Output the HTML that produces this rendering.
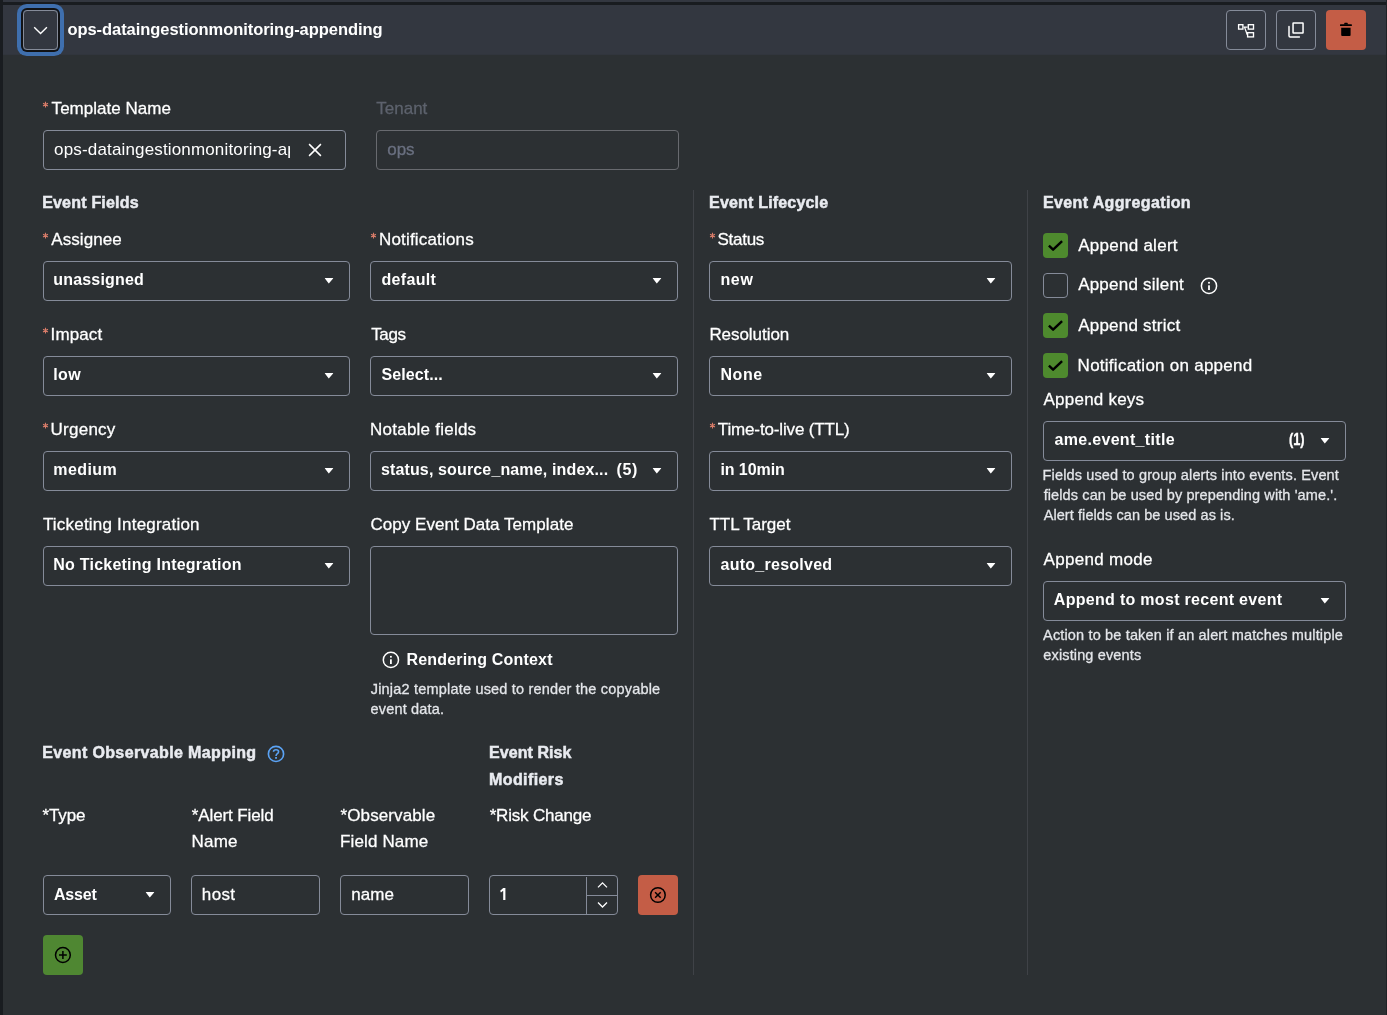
<!DOCTYPE html>
<html><head><meta charset="utf-8"><title>Template</title><style>
html,body{margin:0;padding:0}
body{width:1387px;height:1015px;overflow:hidden;background:#2c3033;font-family:"Liberation Sans",sans-serif;position:relative}
.a{position:absolute}
.t{position:absolute;line-height:20px;white-space:pre}
#tx{position:absolute;left:0;top:0;width:1387px;height:1015px;will-change:transform}
.bx{position:absolute;box-sizing:border-box;border:1px solid #858b99;border-radius:4px}
.bx.dim{border-color:#686a6f}
svg{position:absolute;overflow:visible}
</style></head>
<body>
<div class="a" style="left:0;top:0;width:3px;height:1015px;background:#191c20"></div>
<div class="a" style="left:3px;top:0;width:1384px;height:2px;background:#333740"></div>
<div class="a" style="left:3px;top:2px;width:1384px;height:3px;background:#191c20"></div>
<div class="a" style="left:3px;top:5px;width:1384px;height:49px;background:#333740"></div>
<div class="a" style="left:3px;top:54px;width:1384px;height:1px;background:#31353d"></div>
<div class="a" style="left:1386px;top:0;width:1px;height:1015px;background:#1f2226"></div>
<div class="a" style="left:693px;top:190px;width:1px;height:785px;background:#3f4247"></div>
<div class="a" style="left:1027px;top:190px;width:1px;height:785px;background:#3f4247"></div>
<div class="bx" style="left:23px;top:10px;width:35px;height:40px;box-shadow:0 0 0 2px #111215,0 0 0 6px #3f6fae;border-radius:4px"></div>
<div class="bx " style="left:1226px;top:10px;width:40px;height:40px"></div>
<div class="bx " style="left:1276px;top:10px;width:40px;height:40px"></div>
<div class="a" style="left:1326px;top:10px;width:40px;height:40px;border-radius:4px;background:#c45d46"></div>
<div class="bx " style="left:43px;top:130px;width:303px;height:40px"></div>
<div class="bx dim" style="left:376px;top:130px;width:303px;height:40px"></div>
<div class="bx " style="left:43px;top:261px;width:307px;height:40px"></div>
<div class="bx " style="left:43px;top:356px;width:307px;height:40px"></div>
<div class="bx " style="left:43px;top:451px;width:307px;height:40px"></div>
<div class="bx " style="left:43px;top:546px;width:307px;height:40px"></div>
<div class="bx " style="left:370px;top:261px;width:308px;height:40px"></div>
<div class="bx " style="left:370px;top:356px;width:308px;height:40px"></div>
<div class="bx " style="left:370px;top:451px;width:308px;height:40px"></div>
<div class="bx " style="left:370px;top:546px;width:308px;height:89px"></div>
<div class="bx " style="left:709px;top:261px;width:303px;height:40px"></div>
<div class="bx " style="left:709px;top:356px;width:303px;height:40px"></div>
<div class="bx " style="left:709px;top:451px;width:303px;height:40px"></div>
<div class="bx " style="left:709px;top:546px;width:303px;height:40px"></div>
<div class="bx " style="left:1043px;top:421px;width:303px;height:40px"></div>
<div class="bx " style="left:1043px;top:581px;width:303px;height:40px"></div>
<div class="bx " style="left:43px;top:875px;width:128px;height:40px"></div>
<div class="bx " style="left:191px;top:875px;width:129px;height:40px"></div>
<div class="bx " style="left:340px;top:875px;width:129px;height:40px"></div>
<div class="bx " style="left:489px;top:875px;width:129px;height:40px"></div>
<div class="a" style="left:586px;top:877px;width:1px;height:37px;background:#858b99"></div>
<div class="a" style="left:587px;top:895px;width:30px;height:1px;background:#858b99"></div>
<div class="a" style="left:638px;top:875px;width:40px;height:40px;border-radius:4px;background:#c45d46"></div>
<div class="a" style="left:43px;top:935px;width:40px;height:40px;border-radius:4px;background:#4f8732"></div>
<div class="a" style="left:1043px;top:233px;width:25px;height:25px;border-radius:4px;background:#4e8a2e"></div>
<div class="bx " style="left:1043px;top:273px;width:25px;height:25px"></div>
<div class="a" style="left:1043px;top:313px;width:25px;height:25px;border-radius:4px;background:#4e8a2e"></div>
<div class="a" style="left:1043px;top:353px;width:25px;height:25px;border-radius:4px;background:#4e8a2e"></div>
<svg style="left:0;top:0" width="1387" height="1015" viewBox="0 0 1387 1015"><g transform="translate(0 0)"><path d="M34.2 27.3 L40.55 33.5 L46.9 27.3" fill="none" stroke="#fff" stroke-width="1.4"/></g><g transform="translate(1226 10)"><g fill="none" stroke="#fff" stroke-width="1.35"><rect x="12.6" y="14.7" width="4.3" height="4.4"/><rect x="22.3" y="14.7" width="5.2" height="4.4"/><rect x="21.6" y="22.7" width="5.9" height="4.2"/><path d="M17.6 17 H21.6 M18.6 17.4 L21.3 24.8" stroke-width="1.25"/></g></g><g transform="translate(1276 10)"><g fill="none" stroke="#fff" stroke-width="1.5"><rect x="17.05" y="12.95" width="10" height="10.1" rx="0.3"/><path d="M13 16.6 V25.8 Q13 27 14.2 27 H23.4" stroke-linecap="round"/></g></g><g transform="translate(1326 10)"><g fill="#000"><rect x="14" y="14.2" width="11.9" height="1.9" rx="0.5"/><path d="M17.7 14.4 L18.7 12.8 H21.3 L22.3 14.4 Z"/><path d="M15.2 17.8 H24.6 V24.9 Q24.6 25.9 23.6 25.9 H16.2 Q15.2 25.9 15.2 24.9 Z"/></g></g><g transform="translate(315 150)"><path d="M-5.9 -5.9 L5.9 5.9 M5.9 -5.9 L-5.9 5.9" stroke="#fff" stroke-width="1.5" fill="none"/></g><g transform="translate(1209 285.9)"><circle r="7.6" fill="none" stroke="#fff" stroke-width="1.5"/><rect x="-0.9" y="-4" width="1.8" height="1.7" fill="#fff"/><rect x="-0.9" y="-0.6" width="1.8" height="4.7" fill="#fff"/></g><g transform="translate(390.9 659.9)"><circle r="7.6" fill="none" stroke="#fff" stroke-width="1.5"/><rect x="-0.9" y="-4" width="1.8" height="1.7" fill="#fff"/><rect x="-0.9" y="-0.6" width="1.8" height="4.7" fill="#fff"/></g><g transform="translate(276 753.9)"><circle r="7.6" fill="none" stroke="#5ba3f5" stroke-width="1.65"/><path d="M-2.5 -2.1 Q-2.4 -4.2 0 -4.2 Q2.6 -4.2 2.6 -2.2 Q2.6 -1 1.1 -0.1 Q0.05 0.6 0.05 2" fill="none" stroke="#5ba3f5" stroke-width="1.6"/><rect x="-0.85" y="3.1" width="1.8" height="1.8" fill="#5ba3f5"/></g><g transform="translate(62.9 955)"><circle r="7.4" fill="none" stroke="#000" stroke-width="1.5"/><path d="M-3.9 0 H3.9 M0 -3.9 V3.9" stroke="#000" stroke-width="1.5"/></g><g transform="translate(657.9 895)"><circle r="7.3" fill="none" stroke="#000" stroke-width="1.5"/><path d="M-2.8 -2.8 L2.8 2.8 M2.8 -2.8 L-2.8 2.8" stroke="#000" stroke-width="1.5"/></g><g transform="translate(590 876)"><path d="M8 11.4 L12.5 6.9 L17 11.4 M8 26.5 L12.5 31 L17 26.5" fill="none" stroke="#fff" stroke-width="1.3"/></g><g transform="translate(0 0)"><path d="M503.2 887.9 H505.4 V900 H503.2 V890.7 L500.9 892.5 L500.2 890.8 Z" fill="#fff"/></g><g transform="translate(45.5 104.6)"><path d="M0 -2.8 V2.8 M-2.45 -1.4 L2.45 1.4 M-2.45 1.4 L2.45 -1.4" stroke="#db7d6a" stroke-width="1.1" fill="none"/></g><g transform="translate(45.5 235.6)"><path d="M0 -2.8 V2.8 M-2.45 -1.4 L2.45 1.4 M-2.45 1.4 L2.45 -1.4" stroke="#db7d6a" stroke-width="1.1" fill="none"/></g><g transform="translate(373.5 235.6)"><path d="M0 -2.8 V2.8 M-2.45 -1.4 L2.45 1.4 M-2.45 1.4 L2.45 -1.4" stroke="#db7d6a" stroke-width="1.1" fill="none"/></g><g transform="translate(712.5 235.6)"><path d="M0 -2.8 V2.8 M-2.45 -1.4 L2.45 1.4 M-2.45 1.4 L2.45 -1.4" stroke="#db7d6a" stroke-width="1.1" fill="none"/></g><g transform="translate(45.5 330.6)"><path d="M0 -2.8 V2.8 M-2.45 -1.4 L2.45 1.4 M-2.45 1.4 L2.45 -1.4" stroke="#db7d6a" stroke-width="1.1" fill="none"/></g><g transform="translate(45.5 425.6)"><path d="M0 -2.8 V2.8 M-2.45 -1.4 L2.45 1.4 M-2.45 1.4 L2.45 -1.4" stroke="#db7d6a" stroke-width="1.1" fill="none"/></g><g transform="translate(712.5 425.6)"><path d="M0 -2.8 V2.8 M-2.45 -1.4 L2.45 1.4 M-2.45 1.4 L2.45 -1.4" stroke="#db7d6a" stroke-width="1.1" fill="none"/></g><g transform="translate(324 277)"><path d="M1.2 0.9 H8.8 Q9.5 0.9 9.1 1.5 L5.05 6.25 Q4.8 6.55 4.55 6.25 L0.9 1.5 Q0.5 0.9 1.2 0.9 Z" fill="#fff"/></g><g transform="translate(324 372)"><path d="M1.2 0.9 H8.8 Q9.5 0.9 9.1 1.5 L5.05 6.25 Q4.8 6.55 4.55 6.25 L0.9 1.5 Q0.5 0.9 1.2 0.9 Z" fill="#fff"/></g><g transform="translate(324 467)"><path d="M1.2 0.9 H8.8 Q9.5 0.9 9.1 1.5 L5.05 6.25 Q4.8 6.55 4.55 6.25 L0.9 1.5 Q0.5 0.9 1.2 0.9 Z" fill="#fff"/></g><g transform="translate(324 562)"><path d="M1.2 0.9 H8.8 Q9.5 0.9 9.1 1.5 L5.05 6.25 Q4.8 6.55 4.55 6.25 L0.9 1.5 Q0.5 0.9 1.2 0.9 Z" fill="#fff"/></g><g transform="translate(652 277)"><path d="M1.2 0.9 H8.8 Q9.5 0.9 9.1 1.5 L5.05 6.25 Q4.8 6.55 4.55 6.25 L0.9 1.5 Q0.5 0.9 1.2 0.9 Z" fill="#fff"/></g><g transform="translate(652 372)"><path d="M1.2 0.9 H8.8 Q9.5 0.9 9.1 1.5 L5.05 6.25 Q4.8 6.55 4.55 6.25 L0.9 1.5 Q0.5 0.9 1.2 0.9 Z" fill="#fff"/></g><g transform="translate(652 467)"><path d="M1.2 0.9 H8.8 Q9.5 0.9 9.1 1.5 L5.05 6.25 Q4.8 6.55 4.55 6.25 L0.9 1.5 Q0.5 0.9 1.2 0.9 Z" fill="#fff"/></g><g transform="translate(986 277)"><path d="M1.2 0.9 H8.8 Q9.5 0.9 9.1 1.5 L5.05 6.25 Q4.8 6.55 4.55 6.25 L0.9 1.5 Q0.5 0.9 1.2 0.9 Z" fill="#fff"/></g><g transform="translate(986 372)"><path d="M1.2 0.9 H8.8 Q9.5 0.9 9.1 1.5 L5.05 6.25 Q4.8 6.55 4.55 6.25 L0.9 1.5 Q0.5 0.9 1.2 0.9 Z" fill="#fff"/></g><g transform="translate(986 467)"><path d="M1.2 0.9 H8.8 Q9.5 0.9 9.1 1.5 L5.05 6.25 Q4.8 6.55 4.55 6.25 L0.9 1.5 Q0.5 0.9 1.2 0.9 Z" fill="#fff"/></g><g transform="translate(986 562)"><path d="M1.2 0.9 H8.8 Q9.5 0.9 9.1 1.5 L5.05 6.25 Q4.8 6.55 4.55 6.25 L0.9 1.5 Q0.5 0.9 1.2 0.9 Z" fill="#fff"/></g><g transform="translate(1320 437)"><path d="M1.2 0.9 H8.8 Q9.5 0.9 9.1 1.5 L5.05 6.25 Q4.8 6.55 4.55 6.25 L0.9 1.5 Q0.5 0.9 1.2 0.9 Z" fill="#fff"/></g><g transform="translate(1320 597)"><path d="M1.2 0.9 H8.8 Q9.5 0.9 9.1 1.5 L5.05 6.25 Q4.8 6.55 4.55 6.25 L0.9 1.5 Q0.5 0.9 1.2 0.9 Z" fill="#fff"/></g><g transform="translate(145 891)"><path d="M1.2 0.9 H8.8 Q9.5 0.9 9.1 1.5 L5.05 6.25 Q4.8 6.55 4.55 6.25 L0.9 1.5 Q0.5 0.9 1.2 0.9 Z" fill="#fff"/></g><g transform="translate(1043 233)"><path d="M5.9 12.6 L10.1 16.7 L19.1 8.1" fill="none" stroke="#000" stroke-width="2.4" stroke-linejoin="round"/></g><g transform="translate(1043 313)"><path d="M5.9 12.6 L10.1 16.7 L19.1 8.1" fill="none" stroke="#000" stroke-width="2.4" stroke-linejoin="round"/></g><g transform="translate(1043 353)"><path d="M5.9 12.6 L10.1 16.7 L19.1 8.1" fill="none" stroke="#000" stroke-width="2.4" stroke-linejoin="round"/></g></svg>
<div id="tx">
<div class="t" style="left:67.38px;top:19px;font-size:16.5px;font-weight:700;letter-spacing:-0.054px;color:#ffffff">ops-dataingestionmonitoring-appending</div>
<div class="t" style="left:51.62px;top:99px;font-size:17px;-webkit-text-stroke:0.28px;letter-spacing:0.024px;color:#ffffff">Template Name</div>
<div class="t" style="left:376.22px;top:99px;font-size:17px;-webkit-text-stroke:0.28px;letter-spacing:0.012px;color:#5d626d">Tenant</div>
<div class="t" style="left:387.35px;top:140px;font-size:17px;-webkit-text-stroke:0.28px;letter-spacing:-0.136px;color:#6a7080">ops</div>
<div class="t" style="left:42.15px;top:193px;font-size:16px;font-weight:700;-webkit-text-stroke:0.5px;letter-spacing:0.204px;color:#e9ebf0">Event Fields</div>
<div class="t" style="left:709.05px;top:193px;font-size:16px;font-weight:700;-webkit-text-stroke:0.5px;letter-spacing:0.186px;color:#e9ebf0">Event Lifecycle</div>
<div class="t" style="left:1042.95px;top:193px;font-size:16px;font-weight:700;-webkit-text-stroke:0.5px;letter-spacing:0.379px;color:#e9ebf0">Event Aggregation</div>
<div class="t" style="left:51.35px;top:230px;font-size:17px;-webkit-text-stroke:0.28px;letter-spacing:0.056px;color:#ffffff">Assignee</div>
<div class="t" style="left:378.97px;top:230px;font-size:17px;-webkit-text-stroke:0.28px;letter-spacing:0.178px;color:#ffffff">Notifications</div>
<div class="t" style="left:717.54px;top:230px;font-size:17px;-webkit-text-stroke:0.28px;letter-spacing:-0.285px;color:#ffffff">Status</div>
<div class="t" style="left:50.56px;top:325px;font-size:17px;-webkit-text-stroke:0.28px;letter-spacing:0.125px;color:#ffffff">Impact</div>
<div class="t" style="left:371.22px;top:325px;font-size:17px;-webkit-text-stroke:0.28px;letter-spacing:-0.391px;color:#ffffff">Tags</div>
<div class="t" style="left:709.38px;top:325px;font-size:17px;-webkit-text-stroke:0.28px;letter-spacing:-0.051px;color:#ffffff">Resolution</div>
<div class="t" style="left:50.61px;top:420px;font-size:17px;-webkit-text-stroke:0.28px;letter-spacing:0.23px;color:#ffffff">Urgency</div>
<div class="t" style="left:370.12px;top:420px;font-size:17px;-webkit-text-stroke:0.28px;letter-spacing:0.227px;color:#ffffff">Notable fields</div>
<div class="t" style="left:717.82px;top:420px;font-size:17px;-webkit-text-stroke:0.28px;letter-spacing:-0.147px;color:#ffffff">Time-to-live (TTL)</div>
<div class="t" style="left:42.92px;top:515px;font-size:17px;-webkit-text-stroke:0.28px;letter-spacing:0.208px;color:#ffffff">Ticketing Integration</div>
<div class="t" style="left:370.39px;top:515px;font-size:17px;-webkit-text-stroke:0.28px;letter-spacing:0.048px;color:#ffffff">Copy Event Data Template</div>
<div class="t" style="left:709.52px;top:515px;font-size:17px;-webkit-text-stroke:0.28px;letter-spacing:-0.038px;color:#ffffff">TTL Target</div>
<div class="t" style="left:53.36px;top:270px;font-size:16px;font-weight:700;letter-spacing:0.161px;color:#ffffff">unassigned</div>
<div class="t" style="left:381.53px;top:270px;font-size:16px;font-weight:700;letter-spacing:0.319px;color:#ffffff">default</div>
<div class="t" style="left:720.43px;top:270px;font-size:16px;font-weight:700;letter-spacing:0.644px;color:#ffffff">new</div>
<div class="t" style="left:53.25px;top:365px;font-size:16px;font-weight:700;letter-spacing:0.403px;color:#ffffff">low</div>
<div class="t" style="left:381.47px;top:365px;font-size:16px;font-weight:700;letter-spacing:0.095px;color:#ffffff">Select...</div>
<div class="t" style="left:720.44px;top:365px;font-size:16px;font-weight:700;letter-spacing:0.586px;color:#ffffff">None</div>
<div class="t" style="left:53.33px;top:460px;font-size:16px;font-weight:700;letter-spacing:0.416px;color:#ffffff">medium</div>
<div class="t" style="left:380.91px;top:460px;font-size:16px;font-weight:700;letter-spacing:0.142px;color:#ffffff">status, source_name, index...</div>
<div class="t" style="left:616.59px;top:460px;font-size:16px;font-weight:700;letter-spacing:0.555px;color:#ffffff">(5)</div>
<div class="t" style="left:720.40px;top:460px;font-size:16px;font-weight:700;letter-spacing:-0.071px;color:#ffffff">in 10min</div>
<div class="t" style="left:53.34px;top:555px;font-size:16px;font-weight:700;letter-spacing:0.228px;color:#ffffff">No Ticketing Integration</div>
<div class="t" style="left:720.54px;top:555px;font-size:16px;font-weight:700;letter-spacing:0.26px;color:#ffffff">auto_resolved</div>
<div class="t" style="left:1078.15px;top:236px;font-size:17px;-webkit-text-stroke:0.28px;letter-spacing:0.273px;color:#ffffff">Append alert</div>
<div class="t" style="left:1078.15px;top:275px;font-size:17px;-webkit-text-stroke:0.28px;letter-spacing:0.22px;color:#ffffff">Append silent</div>
<div class="t" style="left:1078.15px;top:316px;font-size:17px;-webkit-text-stroke:0.28px;letter-spacing:0.234px;color:#ffffff">Append strict</div>
<div class="t" style="left:1077.62px;top:356px;font-size:17px;-webkit-text-stroke:0.28px;letter-spacing:0.258px;color:#ffffff">Notification on append</div>
<div class="t" style="left:1043.55px;top:390px;font-size:17px;-webkit-text-stroke:0.28px;letter-spacing:0.221px;color:#ffffff">Append keys</div>
<div class="t" style="left:1054.44px;top:430px;font-size:16px;font-weight:700;letter-spacing:0.322px;color:#ffffff">ame.event_title</div>
<div class="t" style="left:1288.89px;top:430px;font-size:16px;font-weight:700;-webkit-text-stroke:0.35px;color:#ffffff;transform:scaleX(0.798);transform-origin:0 0">(1)</div>
<div class="t" style="left:1042.62px;top:465px;font-size:14.5px;-webkit-text-stroke:0.28px;letter-spacing:0.135px;color:#e4e6ea">Fields used to group alerts into events. Event</div>
<div class="t" style="left:1043.64px;top:485px;font-size:14.5px;-webkit-text-stroke:0.28px;letter-spacing:0.116px;color:#e4e6ea">fields can be used by prepending with 'ame.'.</div>
<div class="t" style="left:1043.66px;top:505px;font-size:14.5px;-webkit-text-stroke:0.28px;letter-spacing:0.084px;color:#e4e6ea">Alert fields can be used as is.</div>
<div class="t" style="left:1043.55px;top:550px;font-size:17px;-webkit-text-stroke:0.28px;letter-spacing:0.304px;color:#ffffff">Append mode</div>
<div class="t" style="left:1053.79px;top:590px;font-size:16px;font-weight:700;letter-spacing:0.301px;color:#ffffff">Append to most recent event</div>
<div class="t" style="left:1043.06px;top:625px;font-size:14.5px;-webkit-text-stroke:0.28px;letter-spacing:0.158px;color:#e4e6ea">Action to be taken if an alert matches multiple</div>
<div class="t" style="left:1043.30px;top:645px;font-size:14.5px;-webkit-text-stroke:0.28px;letter-spacing:0.137px;color:#e4e6ea">existing events</div>
<div class="t" style="left:406.44px;top:650px;font-size:16px;font-weight:700;letter-spacing:0.184px;color:#ffffff">Rendering Context</div>
<div class="t" style="left:370.76px;top:679px;font-size:14.5px;-webkit-text-stroke:0.28px;letter-spacing:0.193px;color:#e4e6ea">Jinja2 template used to render the copyable</div>
<div class="t" style="left:370.60px;top:699px;font-size:14.5px;-webkit-text-stroke:0.28px;letter-spacing:0.16px;color:#e4e6ea">event data.</div>
<div class="t" style="left:42.15px;top:743px;font-size:16px;font-weight:700;-webkit-text-stroke:0.5px;letter-spacing:0.374px;color:#e9ebf0">Event Observable Mapping</div>
<div class="t" style="left:489.00px;top:743px;font-size:16px;font-weight:700;-webkit-text-stroke:0.5px;letter-spacing:0.067px;color:#e9ebf0">Event Risk</div>
<div class="t" style="left:489.00px;top:770px;font-size:16px;font-weight:700;-webkit-text-stroke:0.5px;letter-spacing:0.407px;color:#e9ebf0">Modifiers</div>
<div class="t" style="left:42.54px;top:806px;font-size:17px;-webkit-text-stroke:0.28px;letter-spacing:-0.135px;color:#ffffff">*Type</div>
<div class="t" style="left:191.84px;top:806px;font-size:17px;-webkit-text-stroke:0.28px;letter-spacing:-0.119px;color:#ffffff">*Alert Field</div>
<div class="t" style="left:191.47px;top:832px;font-size:17px;-webkit-text-stroke:0.28px;letter-spacing:0.229px;color:#ffffff">Name</div>
<div class="t" style="left:340.54px;top:806px;font-size:17px;-webkit-text-stroke:0.28px;letter-spacing:0.106px;color:#ffffff">*Observable</div>
<div class="t" style="left:340.07px;top:832px;font-size:17px;-webkit-text-stroke:0.28px;letter-spacing:0.129px;color:#ffffff">Field Name</div>
<div class="t" style="left:489.64px;top:806px;font-size:17px;-webkit-text-stroke:0.28px;letter-spacing:-0.182px;color:#ffffff">*Risk Change</div>
<div class="t" style="left:53.89px;top:885px;font-size:16px;font-weight:700;letter-spacing:-0.141px;color:#ffffff">Asset</div>
<div class="t" style="left:201.83px;top:885px;font-size:17px;-webkit-text-stroke:0.28px;letter-spacing:0.355px;color:#ffffff">host</div>
<div class="t" style="left:351.20px;top:885px;font-size:17px;-webkit-text-stroke:0.28px;letter-spacing:0.045px;color:#ffffff">name</div>
<div class="a" style="left:54.10px;top:140px;width:235.90px;height:22px;overflow:hidden"><div class="t" style="left:0;top:0;font-size:17px;letter-spacing:0.155px;color:#ffffff">ops-dataingestionmonitoring-appending</div></div>
</div>
</body></html>
